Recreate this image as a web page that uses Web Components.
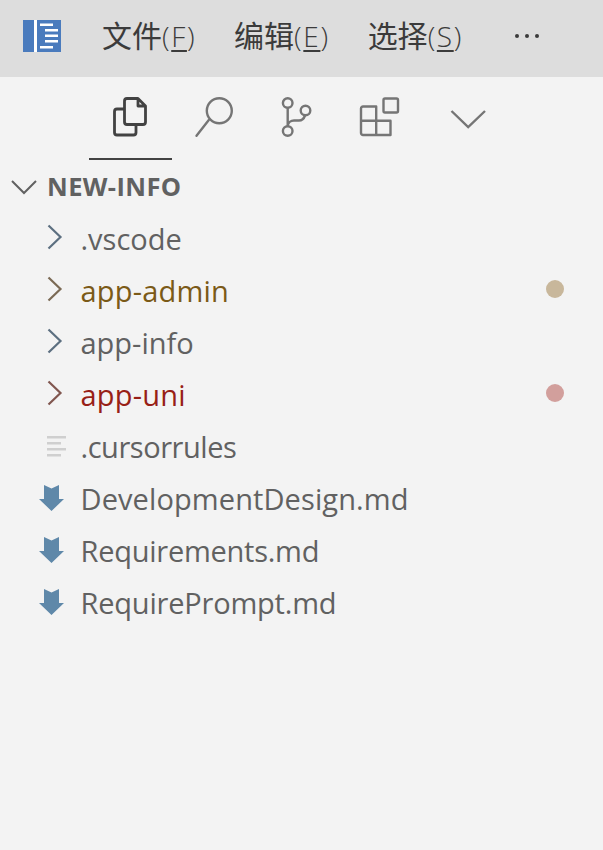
<!DOCTYPE html>
<html>
<head>
<meta charset="utf-8">
<style>
html, body { margin: 0; height: 100%; background: #f3f3f3; }
body { font-family: "Open Sans", "Noto Sans CJK SC", sans-serif; overflow: hidden; }
</style>
</head>
<body>
<vs-titlebar>
  <vs-menu mnemonic="F">文件</vs-menu>
  <vs-menu mnemonic="E">编辑</vs-menu>
  <vs-menu mnemonic="S">选择</vs-menu>
</vs-titlebar>
<vs-tabs></vs-tabs>
<vs-section title="NEW-INFO">
  <vs-row icon="folder" label=".vscode"></vs-row>
  <vs-row icon="folder" label="app-admin" color="#7b5a17" arrow="#7b6a55" dot="#c8b79b" track="0.2"></vs-row>
  <vs-row icon="folder" label="app-info"></vs-row>
  <vs-row icon="folder" label="app-uni" color="#981f17" arrow="#80564f" dot="#d29f9c" track="0.2"></vs-row>
  <vs-row icon="lines" label=".cursorrules" track="-0.45"></vs-row>
  <vs-row icon="md" label="DevelopmentDesign.md" track="0.1"></vs-row>
  <vs-row icon="md" label="Requirements.md" track="-0.25"></vs-row>
  <vs-row icon="md" label="RequirePrompt.md" track="-0.2"></vs-row>
</vs-section>

<script>
const template_titlebar = document.createElement("template");
template_titlebar.innerHTML = `
<style>
:host {
  display: flex;
  align-items: center;
  height: 77px;
  background: #dddddd;
  padding-left: 23px;
  box-sizing: border-box;
}
.logo { width: 38px; height: 32px; margin-right: 41px; margin-top: -5px; flex: none; }
.items { display: flex; gap: 38px; }
.more { margin-left: 52px; margin-top: -6px; display: flex; gap: 6px; }
.more i { width: 4px; height: 4px; border-radius: 50%; background: #3b3b3b; }
</style>
<svg class="logo" viewBox="0 0 38 32">
  <rect x="0" y="0" width="38" height="32" fill="#4a7bbd"/>
  <rect x="11" y="0" width="3" height="32" fill="#fff"/>
  <g fill="#fff">
    <rect x="17" y="3.5" width="13" height="2.5"/>
    <rect x="22" y="9" width="13" height="2.5"/>
    <rect x="22" y="14.5" width="13" height="2.5"/>
    <rect x="22" y="20" width="13" height="2.5"/>
    <rect x="17" y="26" width="13" height="2.5"/>
  </g>
</svg>
<div class="items"><slot></slot></div>
<div class="more"><i></i><i></i><i></i></div>
`;
customElements.define("vs-titlebar", class extends HTMLElement {
  constructor() {
    super();
    this.attachShadow({mode: "open"});
    this.shadowRoot.appendChild(template_titlebar.content.cloneNode(true));
  }
});

const template_menu = document.createElement("template");
template_menu.innerHTML = `
<style>
:host {
  display: inline-block;
  font-size: 30px;
  line-height: 40px;
  color: #3b3b3b;
  white-space: nowrap;
  margin-top: -5px;
}
.paren { font-size: 28px; font-weight: 300; letter-spacing: 1.6px; }
u { text-underline-offset: 3px; text-decoration-thickness: 2px; }
</style>
<slot></slot><span class="paren">(<u class="key"></u>)</span>
`;
customElements.define("vs-menu", class extends HTMLElement {
  constructor() {
    super();
    this.attachShadow({mode: "open"});
    this.shadowRoot.appendChild(template_menu.content.cloneNode(true));
    this.shadowRoot.querySelector(".key").textContent = this.getAttribute("mnemonic");
  }
});

const template_tabs = document.createElement("template");
template_tabs.innerHTML = `
<style>
:host {
  display: flex;
  height: 83px;
  padding-left: 89px;
  box-sizing: border-box;
}
.tab {
  width: 83px;
  height: 83px;
  box-sizing: border-box;
  display: flex;
  justify-content: center;
  padding-top: 17px;
}
.tab.on { border-bottom: 2px solid #424242; }
svg { width: 46px; height: 46px; fill: none; stroke: #757575; stroke-width: 2.4; overflow: visible; }
.on svg { stroke: #424242; stroke-width: 2.8; }
</style>
<div class="tab on">
  <svg viewBox="0 0 46 46" stroke-linejoin="round">
    <path d="M16.500 15H9a2.500 2.500 0 0 0-2.500 2.500v21A2.500 2.500 0 0 0 9 41h16.500a2.500 2.500 0 0 0 2.500-2.500v-8"/>
    <path d="M19 4.500h11l7.500 7.500v16a2.500 2.500 0 0 1-2.500 2.500H19a2.500 2.500 0 0 1-2.500-2.500V7a2.500 2.500 0 0 1 2.500-2.500zM30 4.500V12h7.500"/>
  </svg>
</div>
<div class="tab">
  <svg viewBox="0 0 46 46"><circle cx="28.300" cy="16.700" r="12.500"/><path d="M17.800 26 5.500 41.700" stroke-linecap="round"/></svg>
</div>
<div class="tab">
  <svg viewBox="0 0 46 46"><circle cx="13.700" cy="9" r="4.800"/><circle cx="13.700" cy="37" r="4.800"/><circle cx="31.500" cy="16.500" r="4.800"/><path d="M13.700 14v18M31 21.500c-1 3-3 5-6 5h-5c-3 0-6 2-6.300 5.500"/></svg>
</div>
<div class="tab">
  <svg viewBox="0 0 46 46" stroke-linejoin="round"><path d="M4 14.500a2 2 0 0 1 2-2h13.200V26.700h14.300V41H6a2 2 0 0 1-2-2zM4 26.700h15.200V41"/><rect x="26.500" y="4.500" width="14.500" height="14" rx="1.500"/></svg>
</div>
<div class="tab">
  <svg viewBox="0 0 46 46"><path d="M11.500 17 28.200 33 45 17" stroke-linejoin="miter"/></svg>
</div>
`;
customElements.define("vs-tabs", class extends HTMLElement {
  constructor() {
    super();
    this.attachShadow({mode: "open"});
    this.shadowRoot.appendChild(template_tabs.content.cloneNode(true));
  }
});

const template_section = document.createElement("template");
template_section.innerHTML = `
<style>
:host { display: block; }
.head {
  display: flex;
  align-items: center;
  height: 52px;
  padding-left: 10px;
  margin-top: 1px;
  color: #616161;
  font-size: 25.5px;
  letter-spacing: 0.4px;
  font-weight: 700;
}
.name { margin-top: -2px; }
svg { width: 28px; height: 28px; margin-right: 9px; fill: none; stroke: #616161; stroke-width: 2; }
.rows { display: block; }
</style>
<div class="head">
  <svg viewBox="0 0 28 28"><path d="M2 8 14 20 26 8"/></svg>
  <span class="name"></span>
</div>
<div class="rows"><slot></slot></div>
`;
customElements.define("vs-section", class extends HTMLElement {
  constructor() {
    super();
    this.attachShadow({mode: "open"});
    this.shadowRoot.appendChild(template_section.content.cloneNode(true));
    this.shadowRoot.querySelector(".name").textContent = this.getAttribute("title");
  }
});

const icons = {
  folder: c => `<svg width="20" height="30" viewBox="0 0 20 30" style="margin-left:46px;margin-right:14.500px"><path d="M2.500 1.500 14.500 13 2.500 24.500" fill="none" stroke="${c}" stroke-width="2.200"/></svg>`,
  lines: () => `<svg width="24" height="24" viewBox="0 0 24 24" style="margin-left:46px;margin-right:10.500px"><g fill="#cfcfcf"><rect x="1" y="1" width="19" height="2.500"/><rect x="1" y="7" width="14" height="2.500"/><rect x="1" y="13" width="19" height="2.500"/><rect x="1" y="19" width="14" height="2.500"/></g></svg>`,
  md: () => `<svg width="28" height="28" viewBox="0 0 28 28" style="margin-left:38px;margin-right:14.500px"><path d="M6 0 13.500 3.500 21 0V14H26L13.500 26 1 14H6Z" fill="#5f88a9"/></svg>`
};

const template_row = document.createElement("template");
template_row.innerHTML = `
<style>
:host {
  display: flex;
  align-items: center;
  height: 52px;
  font-size: 29px;
  color: #616161;
  white-space: nowrap;
}
.label { flex: 1; margin-top: -1px; }
.dot { width: 18px; height: 18px; border-radius: 50%; margin-right: 39px; margin-top: -5px; display: none; }
</style>
<span class="icon" style="display:contents"></span>
<span class="label"></span>
<span class="dot"></span>
`;
customElements.define("vs-row", class extends HTMLElement {
  constructor() {
    super();
    this.attachShadow({mode: "open"});
    this.shadowRoot.appendChild(template_row.content.cloneNode(true));
    const arrow = this.getAttribute("arrow") || "#5c6f80";
    this.shadowRoot.querySelector(".icon").innerHTML = icons[this.getAttribute("icon")](arrow);
    const label = this.shadowRoot.querySelector(".label");
    label.textContent = this.getAttribute("label");
    if ( this.hasAttribute("color") ) {
      label.style.color = this.getAttribute("color");
    }
    if ( this.hasAttribute("track") ) {
      label.style.letterSpacing = this.getAttribute("track") + "px";
    }
    if ( this.hasAttribute("dot") ) {
      const dot = this.shadowRoot.querySelector(".dot");
      dot.style.display = "block";
      dot.style.background = this.getAttribute("dot");
    }
  }
});
</script>
</body>
</html>
